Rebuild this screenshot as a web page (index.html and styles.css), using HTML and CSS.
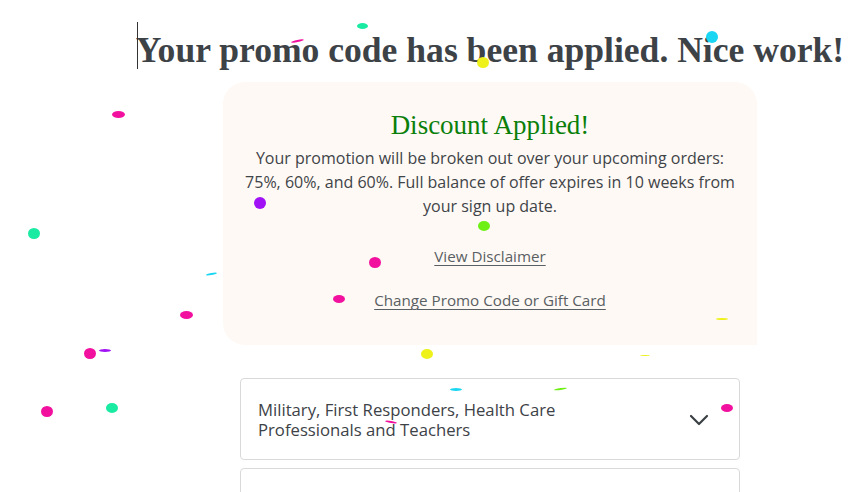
FILE: index.html
```html
<!DOCTYPE html>
<html lang="en">
<head>
<meta charset="utf-8">
<title>Promo applied</title>
<link rel="stylesheet" href="styles.css">
</head>
<body>
<main class="page">
  <h1 class="title"><span class="caret"></span>Your promo code has been applied. Nice work!</h1>
  <section class="card">
    <h2 class="card-title">Discount Applied!</h2>
    <p class="card-text">Your promotion will be broken out over your upcoming orders: 75%, 60%, and 60%. Full balance of offer expires in 10 weeks from your sign up date.</p>
    <a class="link link-first" href="#">View Disclaimer</a>
    <a class="link" href="#">Change Promo Code or Gift Card</a>
  </section>
  <div class="accordion">
    <div class="acc-item">
      <span class="acc-label">Military, First Responders, Health Care Professionals and Teachers</span>
      <svg class="chev" width="20" height="12" viewBox="0 0 20 12"><path d="M2 2 L10 10 L18 2" fill="none" stroke="#3a3f44" stroke-width="2.2" stroke-linecap="round" stroke-linejoin="round"/></svg>
    </div>
    <div class="acc-item acc-empty"></div>
  </div>
</main>
<div class="confetti">
  <i class="c e green" style="left:357px;top:23px;width:11px;height:6px"></i>
  <i class="c d pink" style="left:291px;top:40px;width:13px;height:2px;transform:rotate(-12deg)"></i>
  <i class="c cyan" style="left:706px;top:31px;width:12px;height:12px"></i>
  <i class="c yellow" style="left:477px;top:57px;width:12px;height:11px"></i>
  <i class="c pink" style="left:112px;top:111px;width:13px;height:7px"></i>
  <i class="c purple" style="left:254px;top:197px;width:12px;height:12px"></i>
  <i class="c green" style="left:28px;top:228px;width:12px;height:11px"></i>
  <i class="c lime" style="left:478px;top:221px;width:12px;height:10px"></i>
  <i class="c pink" style="left:369px;top:257px;width:12px;height:11px"></i>
  <i class="c cyan" style="left:206px;top:273px;width:11px;height:2px;transform:rotate(-10deg)"></i>
  <i class="c pink" style="left:333px;top:295px;width:12px;height:8px"></i>
  <i class="c pink" style="left:180px;top:311px;width:13px;height:8px"></i>
  <i class="c yellow" style="left:716px;top:318px;width:12px;height:2px"></i>
  <i class="c pink" style="left:84px;top:348px;width:12px;height:11px"></i>
  <i class="c purple" style="left:99px;top:349px;width:12px;height:3px"></i>
  <i class="c yellow" style="left:421px;top:349px;width:12px;height:10px"></i>
  <i class="c yellow" style="left:640px;top:355px;width:10px;height:1px"></i>
  <i class="c cyan" style="left:450px;top:388px;width:12px;height:3px"></i>
  <i class="c lime" style="left:554px;top:388px;width:13px;height:2px;transform:rotate(-8deg)"></i>
  <i class="c pink" style="left:721px;top:404px;width:12px;height:8px"></i>
  <i class="c pink" style="left:41px;top:406px;width:12px;height:11px"></i>
  <i class="c green" style="left:106px;top:403px;width:12px;height:10px"></i>
  <i class="c pink" style="left:385px;top:421px;width:12px;height:2px;transform:rotate(10deg)"></i>
</div>
</body>
</html>
```
FILE: styles.css
```css
* { box-sizing: border-box; }
html, body { margin: 0; padding: 0; background: #fff; }
body { width: 853px; height: 492px; overflow: hidden; position: relative; font-family: "Open Sans", "Noto Sans", sans-serif; color: #3d4247; }

.page {
  padding-left: 127px;
  display: flex;
  flex-direction: column;
  align-items: center;
}

.title {
  position: relative;
  margin: 30px 0 0 0;
  font-family: "Liberation Serif", serif;
  font-weight: bold;
  font-size: 35.6px;
  line-height: 40px;
  color: #3d4247;
  white-space: nowrap;
}
.caret {
  position: absolute;
  left: 1px;
  top: -8px;
  width: 1px;
  height: 47px;
  background: #333;
}

.card {
  margin-top: 12px;
  width: 534px;
  height: 263px;
  background: #fef9f5;
  border-radius: 22px 22px 0 22px;
  display: flex;
  flex-direction: column;
  align-items: center;
  padding: 28px 16px 0;
  text-align: center;
}
.card-title {
  margin: 0;
  font-family: "Liberation Serif", serif;
  font-weight: normal;
  font-size: 27px;
  line-height: 30px;
  color: #0a7f0a;
}
.card-text {
  margin: 6px 0 0;
  font-size: 16px;
  line-height: 24px;
  color: #3f4448;
  width: 500px;
}
.link {
  font-size: 15.2px;
  line-height: 20px;
  color: #5a5f63;
  text-decoration: underline;
  text-underline-offset: 3px;
  text-decoration-thickness: 1px;
}
.link-first { margin-top: 28px; }
.link + .link { margin-top: 24px; }

.accordion {
  margin-top: 33px;
  display: flex;
  flex-direction: column;
  gap: 8px;
  width: 500px;
}
.acc-item {
  border: 1px solid #d9d9d9;
  border-radius: 4px;
  height: 82px;
  display: flex;
  align-items: center;
  justify-content: space-between;
  padding: 2px 30px 0 17px;
}
.acc-label {
  width: 330px;
  font-size: 16.7px;
  line-height: 20px;
  color: #3d4247;
}
.chev { margin-top: 0; }

.confetti { position: absolute; inset: 0; pointer-events: none; }
.c { position: absolute; display: block; border-radius: 50%; }
.green { background: #19eba3; }
.pink { background: #f2109e; }
.cyan { background: #1ad6f2; }
.yellow { background: #eef21a; }
.purple { background: #a012f5; }
.lime { background: #6ef015; }
```
